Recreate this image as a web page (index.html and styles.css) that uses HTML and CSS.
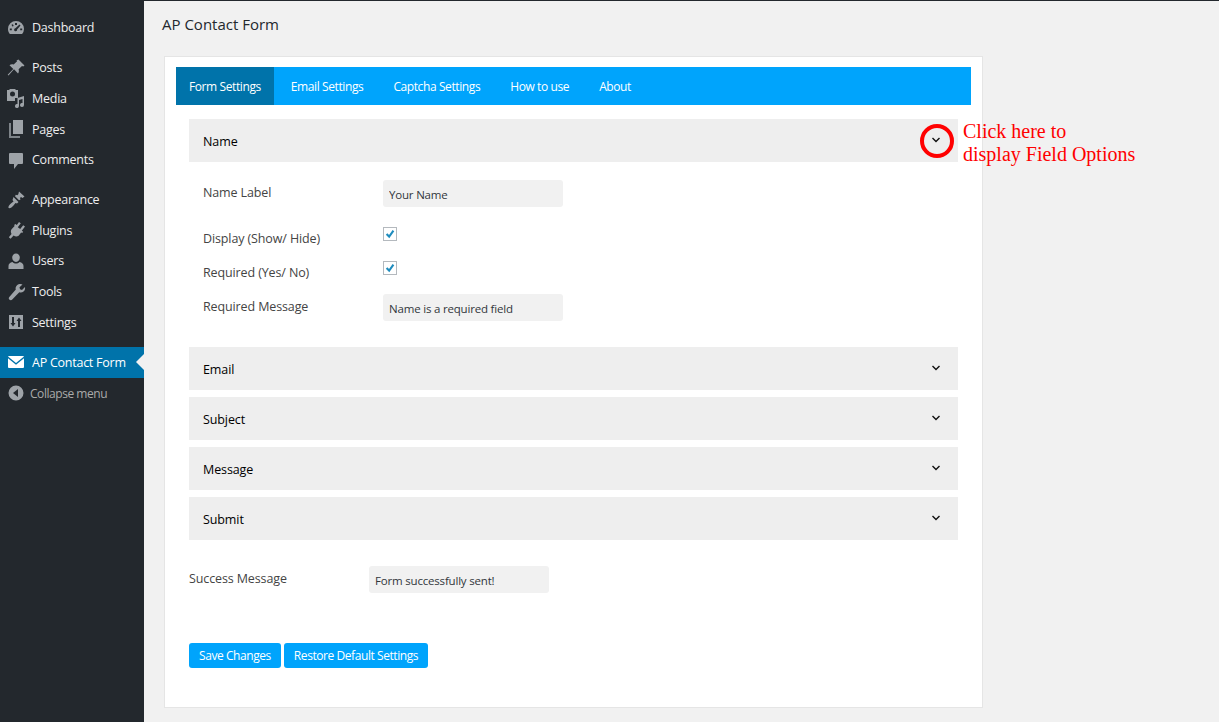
FILE: index.html
```html
<!DOCTYPE html>
<html lang="en">
<head>
    <meta charset="UTF-8">
    <title>AP Contact Form</title>
    <link rel="stylesheet" href="styles.css">
</head>
<body>
    <div class="admin">
        <!-- Sidebar -->
        <nav class="sidebar">
            <a class="menu-item" href="#">
                <svg class="menu-icon" viewBox="0 0 20 20"><path fill-rule="evenodd" d="M10 3a8 8 0 0 0-8 8c0 2 .7 3.700 1.900 5h12.200A8 8 0 0 0 18 11a8 8 0 0 0-8-8zM9 5h2v2H9zM5.500 6.800l1.400-.6.800 1.700-1.400.6zM3.800 10.500h2v1.800h-2zM14.200 10.500h2v1.800h-2zM13.500 6.500l1 1-3.400 4.100a1.500 1.500 0 1 1-1.700-1.300z"/></svg>
                <span>Dashboard</span>
            </a>
            <div class="menu-sep"></div>
            <a class="menu-item" href="#">
                <svg class="menu-icon" viewBox="0 0 20 20"><path d="M12.500 1.500l6 6-1.300 1-1.200-.6-3.400 3.400c.6 1.700.2 3.300-.6 4.200L8 11.300l-5.500 6.200-.8-.8L7.300 11 3.500 7.200c1-.9 2.600-1.200 4.200-.6l3.400-3.400-.6-.8z"/></svg>
                <span>Posts</span>
            </a>
            <a class="menu-item" href="#">
                <svg class="menu-icon" viewBox="0 0 20 20"><path fill-rule="evenodd" d="M1 2h2l1-1h5l1 1h2v8H9v3H1zM6.500 3.500a2.500 2.500 0 1 0 0 5 2.500 2.500 0 0 0 0-5z"/><path d="M18 8v9a2 2 0 1 1-1.500-1.900V11l-3.500 1v6a2 2 0 1 1-1.500-1.900V10z"/></svg>
                <span>Media</span>
            </a>
            <a class="menu-item" href="#">
                <svg class="menu-icon" viewBox="0 0 20 20"><path d="M7 1h10v14H7z"/><path d="M5 4v13h9v2H3V4z" opacity=".75"/></svg>
                <span>Pages</span>
            </a>
            <a class="menu-item" href="#">
                <svg class="menu-icon" viewBox="0 0 20 20"><path d="M4 3h12a1 1 0 0 1 1 1v9a1 1 0 0 1-1 1h-4l-4 5v-5H4a1 1 0 0 1-1-1V4a1 1 0 0 1 1-1z"/></svg>
                <span>Comments</span>
            </a>
            <div class="menu-sep"></div>
            <a class="menu-item" href="#">
                <svg class="menu-icon" viewBox="0 0 20 20"><path d="M13 1.500l5.500 5-2 1.500-1.500-1-1 1 .5 1.500-1.500.8-4-4 .8-1.500 1.500.5 1-1zM7.500 7l5 5-1.500 1.500L9.500 13l-2 2.500C6 17.500 4 18.500 2.500 18c-.5-1.500 1-3.500 3-5l2-1.500-1-1.500z"/></svg>
                <span>Appearance</span>
            </a>
            <a class="menu-item" href="#">
                <svg class="menu-icon" viewBox="0 0 20 20"><path d="M13 2l1.800 1.300-3 4 2.400 1.700 3-3.800L19 6.500l-3.200 4.200 1.400 1-1 1.300-1-.4-2.600 3.200c-1.500 1.200-3.400 1-5-.2l-3 3.200-1.800-1.500 2.700-3.400c-.9-1.700-.9-3.400.3-4.800l2.800-3-.5-1 1.300-1 1.400 1z"/></svg>
                <span>Plugins</span>
            </a>
            <a class="menu-item" href="#">
                <svg class="menu-icon" viewBox="0 0 20 20"><path d="M10 2.500a3.800 3.800 0 0 1 3.800 4c0 2.300-1.500 4.500-3.800 4.500S6.200 8.800 6.200 6.500a3.800 3.800 0 0 1 3.800-4zM13.500 11c2.500.5 4 2 4 4v3h-15v-3c0-2 1.500-3.500 4-4 1 1 2.200 1.500 3.500 1.500s2.500-.5 3.500-1.500z"/></svg>
                <span>Users</span>
            </a>
            <a class="menu-item" href="#">
                <svg class="menu-icon" viewBox="0 0 20 20"><path d="M14.500 2c.8 0 1.500.2 2 .5l-3 2.800.5 2 2 .6 3-3c.4 1.900-.2 3.500-1.500 4.600-1.200 1-2.800 1.200-4.200.7l-7.300 7.600c-.9.900-2.300.2-2.700-.2-.6-.7-.8-1.900 0-2.700L9.800 7.500C9.300 6 9.700 4.500 10.800 3.400 11.800 2.400 13.200 2 14.500 2z"/></svg>
                <span>Tools</span>
            </a>
            <a class="menu-item" href="#">
                <svg class="menu-icon" viewBox="0 0 20 20"><path fill-rule="evenodd" d="M3 3h14v14H3zM6 5v6H4.500L7 14.500 9.500 11H8V5zM12 15V9h-1.500L13 5.500 15.500 9H14v6z"/></svg>
                <span>Settings</span>
            </a>
            <div class="menu-sep"></div>
            <a class="menu-item current" href="#">
                <svg class="menu-icon" viewBox="0 0 20 20"><path d="M3 4h14a1 1 0 0 1 1 .6l-8 6.400-8-6.400A1 1 0 0 1 3 4zM2 6.300l8 6.400 8-6.400V15a1 1 0 0 1-1 1H3a1 1 0 0 1-1-1z"/></svg>
                <span>AP Contact Form</span>
            </a>
            <a class="menu-item collapse" href="#">
                <svg class="menu-icon" viewBox="0 0 20 20"><path fill-rule="evenodd" d="M10 2.500a7.500 7.500 0 1 1 0 15 7.500 7.500 0 0 1 0-15zM12 6l-5 4 5 4z"/></svg>
                <span>Collapse menu</span>
            </a>
        </nav>

        <!-- Main Content -->
        <main class="content">
            <h1 class="page-title">AP Contact Form</h1>
            <div class="card">
                <div class="tabs">
                    <a class="tab active" href="#">Form Settings</a>
                    <a class="tab" href="#">Email Settings</a>
                    <a class="tab" href="#">Captcha Settings</a>
                    <a class="tab" href="#">How to use</a>
                    <a class="tab" href="#">About</a>
                </div>

                <div class="fields">
                    <div class="field-head">
                        <span>Name</span>
                        <svg class="chevron" viewBox="0 0 10 6"><path d="M1.500 1L5 4.500 8.500 1"/></svg>
                        <div class="callout-ring"></div>
                        <div class="callout-text">Click here to<br>display Field Options</div>
                    </div>
                    <div class="field-options">
                        <div class="row row-text">
                            <label>Name Label</label>
                            <input class="text-input" type="text" value="Your Name">
                        </div>
                        <div class="row row-check">
                            <label>Display (Show/ Hide)</label>
                            <span class="check"><svg viewBox="0 0 14 14"><path d="M3 7l3 3 5-7"/></svg></span>
                        </div>
                        <div class="row row-check">
                            <label>Required (Yes/ No)</label>
                            <span class="check"><svg viewBox="0 0 14 14"><path d="M3 7l3 3 5-7"/></svg></span>
                        </div>
                        <div class="row row-text">
                            <label>Required Message</label>
                            <input class="text-input" type="text" value="Name is a required field">
                        </div>
                    </div>
                    <div class="field-head"><span>Email</span><svg class="chevron" viewBox="0 0 10 6"><path d="M1.500 1L5 4.500 8.500 1"/></svg></div>
                    <div class="field-head"><span>Subject</span><svg class="chevron" viewBox="0 0 10 6"><path d="M1.500 1L5 4.500 8.500 1"/></svg></div>
                    <div class="field-head"><span>Message</span><svg class="chevron" viewBox="0 0 10 6"><path d="M1.500 1L5 4.500 8.500 1"/></svg></div>
                    <div class="field-head"><span>Submit</span><svg class="chevron" viewBox="0 0 10 6"><path d="M1.500 1L5 4.500 8.500 1"/></svg></div>

                    <div class="row row-text success">
                        <label>Success Message</label>
                        <input class="text-input" type="text" value="Form successfully sent!">
                    </div>

                    <div class="actions">
                        <button type="button">Save Changes</button>
                        <button type="button">Restore Default Settings</button>
                    </div>
                </div>
            </div>
        </main>
    </div>
</body>
</html>
```

FILE: styles.css
```css
* {
    margin: 0;
    padding: 0;
    box-sizing: border-box;
    font-family: "Open Sans", "Noto Sans", Arial, sans-serif;
}

html, body {
    height: 722px;
    overflow: hidden;
    background: #f1f1f1;
}

.admin {
    display: flex;
    height: 722px;
    border-top: 1px solid #23282d;
}

/* Sidebar */
.sidebar {
    width: 144px;
    flex-shrink: 0;
    background: #23282d;
    padding-top: 11.4px;
}

.menu-item {
    position: relative;
    display: flex;
    align-items: center;
    height: 30.67px;
    padding-left: 6px;
    color: #eee;
    font-size: 12.5px;
    letter-spacing: -0.25px;
    text-decoration: none;
}

.menu-item span {
    margin-left: 6px;
    white-space: nowrap;
}

.menu-icon {
    width: 20px;
    height: 20px;
    fill: #9ea3a8;
    flex-shrink: 0;
}

.menu-sep {
    height: 9.33px;
}

.menu-item.current {
    background: #0073aa;
    color: #fff;
}

.menu-item.current .menu-icon {
    fill: #fff;
}

.menu-item.current::after {
    content: "";
    position: absolute;
    right: 0;
    top: 50%;
    margin-top: -8px;
    border: 8px solid transparent;
    border-right-color: #f1f1f1;
    border-left: 0;
}

.menu-item.collapse {
    padding-top: 1px;
    color: #aaa;
    font-size: 12px;
    letter-spacing: -0.45px;
}

.menu-item.collapse span {
    margin-left: 4px;
}

/* Main Content */
.content {
    flex: 1;
    padding: 0 20px;
}

.page-title {
    margin: 13px 0 22px -2px;
    font-size: 15px;
    line-height: 20px;
    font-weight: 400;
    color: #23282d;
}

.card {
    width: 819px;
    height: 652px;
    background: #fff;
    border: 1px solid #e5e5e5;
    padding: 10px 11px;
}

/* Tabs */
.tabs {
    display: flex;
    gap: 4px;
    height: 38px;
    background: #00a4fc;
}

.tab {
    display: flex;
    align-items: center;
    padding: 0 13px;
    color: #fff;
    font-size: 12px;
    letter-spacing: -0.4px;
    text-decoration: none;
}

.tab.active {
    background: #0073aa;
}

/* Field list */
.fields {
    padding: 14px 13px 0;
}

.field-head {
    position: relative;
    display: flex;
    align-items: center;
    justify-content: space-between;
    height: 43px;
    margin-bottom: 7px;
    padding: 1px 17px 0 14px;
    background: #eee;
    color: #000;
    font-size: 12.5px;
    letter-spacing: -0.1px;
}

.chevron {
    width: 10px;
    height: 6px;
    margin-top: -2px;
    fill: none;
    stroke: #111;
    stroke-width: 1.4;
}

.callout-ring {
    position: absolute;
    left: 731px;
    top: 5px;
    width: 34px;
    height: 34px;
    border: 4px solid #f00;
    border-radius: 50%;
}

.callout-text {
    position: absolute;
    left: 774px;
    top: 1px;
    width: 220px;
    color: #f00;
    font-family: "Liberation Serif", serif;
    font-size: 20px;
    line-height: 23px;
    letter-spacing: 0;
}

.field-options {
    padding: 11px 14px 26px;
}

.row {
    display: flex;
    align-items: flex-start;
    color: #444;
    font-size: 12.5px;
    letter-spacing: -0.12px;
}

.row label {
    width: 180px;
    flex-shrink: 0;
    line-height: 20px;
}

.row-text {
    height: 27px;
}

.row-text label {
    padding-top: 3px;
}

.row-text + .row-check {
    margin-top: 20px;
}

.row-check {
    height: 34px;
}

.row-check + .row-text {
    margin-top: -1px;
}

.row-check label {
    padding-top: 2px;
}

.text-input {
    width: 180px;
    height: 27px;
    padding: 2px 6px 0;
    border: none;
    border-radius: 3px;
    background: #f1f1f1;
    color: #32373c;
    font-size: 11.5px;
    letter-spacing: -0.19px;
}

.check {
    display: block;
    width: 14px;
    height: 14px;
    border: 1px solid #b4b9be;
    background: #fff;
}

.check svg {
    display: block;
    width: 12px;
    height: 12px;
    fill: none;
    stroke: #1e8cbe;
    stroke-width: 2.4;
}

.success {
    margin-top: 26px;
}

/* Buttons */
.actions {
    display: flex;
    gap: 3px;
    margin-top: 50px;
}

button {
    height: 25px;
    padding: 0 10px;
    background: #00a4fc;
    color: #fff;
    border: none;
    border-radius: 3px;
    font-size: 12px;
    letter-spacing: -0.43px;
    cursor: pointer;
}
```
